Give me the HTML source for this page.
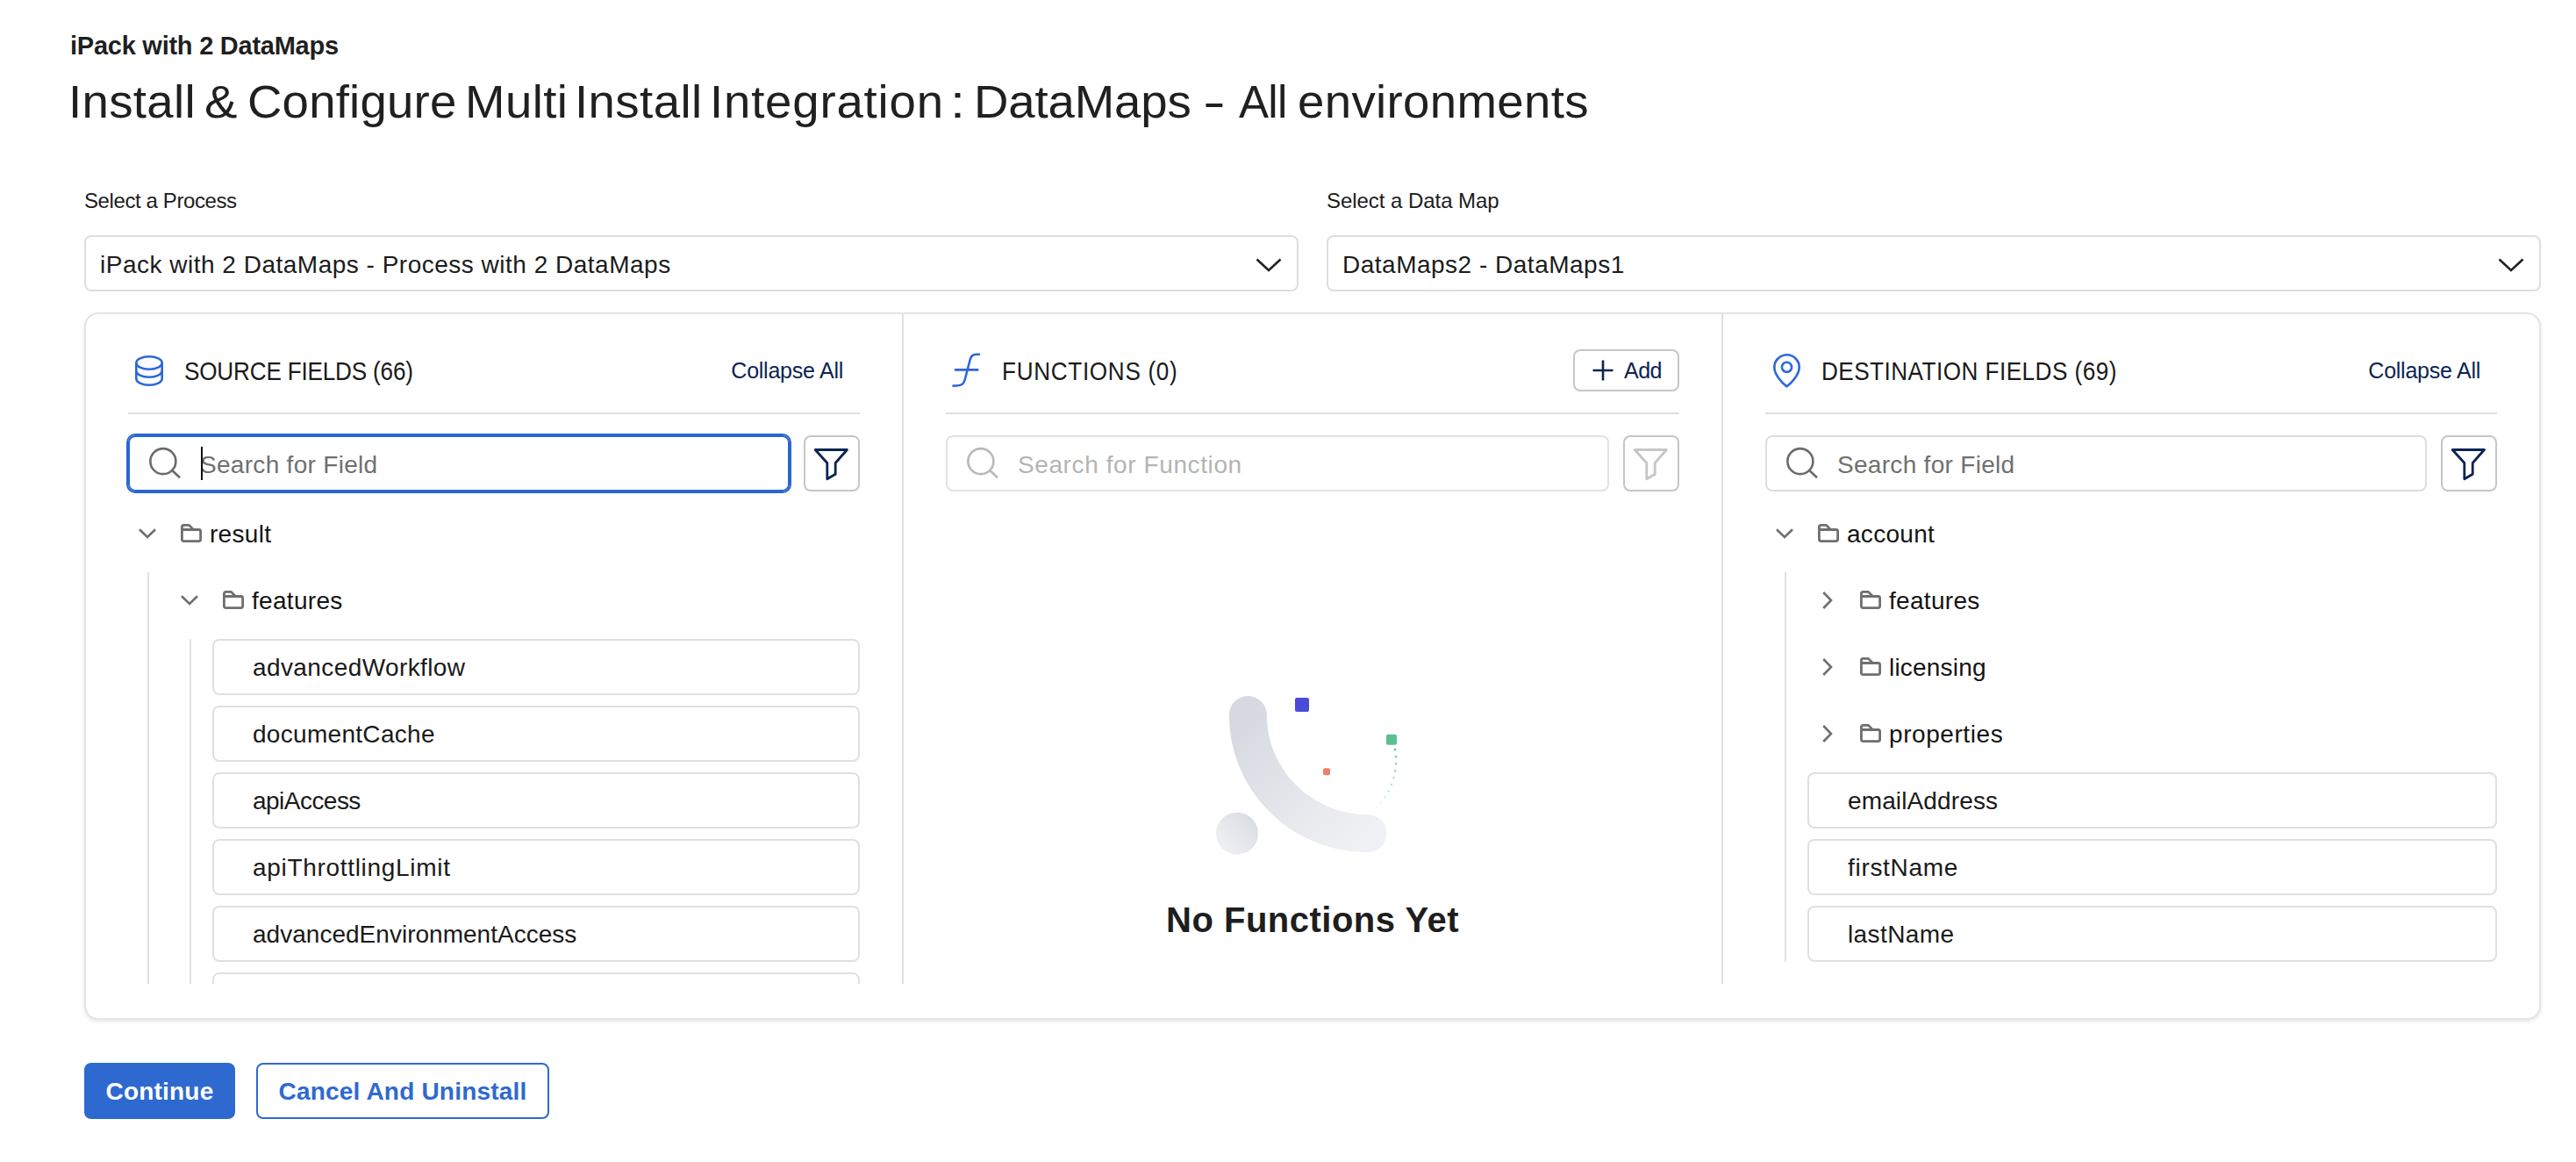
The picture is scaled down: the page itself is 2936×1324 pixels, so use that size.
<!DOCTYPE html>
<html lang="en">
<head>
<meta charset="utf-8">
<title>Install &amp; Configure Multi Install Integration</title>
<style>
*{box-sizing:border-box;margin:0;padding:0}
html,body{width:2936px;height:1324px;background:#fff}
body{font-family:"Liberation Sans",sans-serif;color:#1c1c1c;position:relative;-webkit-font-smoothing:antialiased}
svg{display:block;overflow:visible}
.sub{position:absolute;left:80px;top:32px;font-size:29px;line-height:40px;font-weight:bold;color:#1f1f1f;letter-spacing:-.25px;white-space:nowrap}
h1{position:absolute;left:0;top:85px;width:2000px;height:64px;font-size:51px;line-height:64px;font-weight:normal;color:#202020;white-space:nowrap}
h1 span{position:absolute;top:0;display:block;white-space:pre;transform-origin:0 50%}
.fld{position:absolute;top:213px;width:1384px}
.fld label{display:block;font-size:24px;line-height:32px;color:#1c1c1c;letter-spacing:-.4px;white-space:nowrap}
.sel{margin-top:23px;height:64px;border:2px solid #dedede;border-radius:8px;position:relative;padding:0 0 0 16px;font-size:28px;line-height:63px;letter-spacing:.5px;white-space:nowrap;color:#1c1c1c}
.sel svg{position:absolute;right:17px;top:24px}
.card{position:absolute;left:96px;top:356px;width:2800px;height:806px;border:2px solid #e4e4e4;border-radius:16px;box-shadow:0 2px 4px rgba(0,0,0,.10);background:#fff}
.cols{display:flex;height:763px;overflow:hidden}
.col{flex:none;width:930px;padding:40px 48px 0 48px;position:relative}
.col.c2{width:934px}
.col.c3{width:932px}
.col+.col{border-left:2px solid #e0e0e0}
.hd{height:74px;border-bottom:2px solid #e0e0e0;display:flex;align-items:flex-start;position:relative}
.hd .ic{position:absolute;left:0;top:0}
.hd .t{position:absolute;left:64px;top:5px;font-size:30px;line-height:40px;color:#1a1a1a;white-space:nowrap;transform-origin:0 50%;transform:scaleX(.87)}
.hd .lnk{position:absolute;right:19px;top:4px;font-size:25px;line-height:40px;color:#0a2452;white-space:nowrap;letter-spacing:-.25px}
.add{position:absolute;right:0;top:0;width:121px;height:48px;border:2px solid #c6c6c6;border-radius:8px;font-size:25px;line-height:44px;color:#0a2452;padding-left:56px;letter-spacing:-.5px}
.add svg{position:absolute;left:20px;top:10px}
.srow{margin-top:24px;display:flex;gap:16px;height:64px}
.inp{flex:1;border:2px solid #dedede;border-radius:8px;position:relative;font-size:28px;line-height:63px;padding-left:80px;color:#707070;white-space:nowrap;letter-spacing:.3px}
.inp svg{position:absolute;left:22px;top:12px}
.inp.foc{border-color:#2b66d0;box-shadow:0 0 0 2px #2b66d0}
.inp.foc i{position:absolute;left:81px;top:11px;width:2px;height:38px;background:#111}
.inp.dis{color:#b4b4b4;border-color:#e2e2e2}
.fbtn{width:64px;height:64px;border:2px solid #c6c6c6;border-radius:8px;flex:none}
.tree{margin-top:16px}
.row{height:64px;margin-bottom:12px;position:relative;font-size:28px;line-height:64px;color:#141414;white-space:nowrap}
.row .ch{position:absolute;left:10px;top:0}
.row .fo{position:absolute;left:58px;top:0}
.row span{position:absolute;left:93px;top:1px;letter-spacing:.3px}
.kids{border-left:2px solid #e1e1e1;margin-left:22px;padding-left:24px}
.leaf{height:64px;margin-bottom:12px;border:2px solid #e0e0e0;border-radius:8px;font-size:28px;line-height:61px;padding-left:44px;color:#1a1a1a;white-space:nowrap;letter-spacing:.3px}
.empty{position:absolute;left:0;right:0;top:0;text-align:center}
.empty h2{position:absolute;left:0;right:0;top:666px;font-size:40px;line-height:48px;font-weight:bold;color:#1e1e1e;letter-spacing:.5px}
.btn{position:absolute;top:1211px;height:64px;border-radius:8px;font-size:28px;font-weight:bold;line-height:65px;text-align:center;white-space:nowrap;letter-spacing:.2px}
.pri{left:96px;width:172px;background:#2e69d0;color:#fff}
.sec{left:292px;width:334px;border:2px solid #2e69d0;color:#2e69d0;line-height:61px;background:#fff}
</style>
</head>
<body>
<div class="sub">iPack with 2 DataMaps</div>
<h1><span style="left:77.8px;letter-spacing:0.32px;transform:scaleX(1.07)">Install </span><span style="left:233.1px;transform:scaleX(1.1)">&amp; </span><span style="left:281.9px;letter-spacing:0.2px;transform:scaleX(1.07)">Configure </span><span style="left:530.0px;letter-spacing:0.4px;transform:scaleX(1.07)">Multi </span><span style="left:655.4px;letter-spacing:0.4px;transform:scaleX(1.07)">Install </span><span style="left:809.2px;letter-spacing:0.76px;transform:scaleX(1.07)">Integration </span><span style="left:1083.2px;transform:scaleX(1.2)">: </span><span style="left:1110.1px;letter-spacing:-0.12px;transform:scaleX(1.07)">DataMaps </span><span style="left:1371.1px;transform:scaleX(1.52)">- </span><span style="left:1412px;letter-spacing:-.65px">All </span><span style="left:1479.3px;letter-spacing:0.34px;transform:scaleX(1.07)">environments </span></h1>

<div class="fld" style="left:96px">
  <label>Select a Process</label>
  <div class="sel">iPack with 2 DataMaps - Process with 2 DataMaps
    <svg width="30" height="16" viewBox="0 0 30 16"><path d="M1.5 1.5 L15 14 L28.5 1.5" fill="none" stroke="#222" stroke-width="2.6"/></svg>
  </div>
</div>
<div class="fld" style="left:1512px">
  <label style="letter-spacing:-.05px">Select a Data Map</label>
  <div class="sel">DataMaps2 - DataMaps1
    <svg width="30" height="16" viewBox="0 0 30 16"><path d="M1.5 1.5 L15 14 L28.5 1.5" fill="none" stroke="#222" stroke-width="2.6"/></svg>
  </div>
</div>

<div class="card">
<div class="cols">
<!--COL1--><div class="col">
  <div class="hd">
    <svg class="ic" style="left:8px;top:7px" width="32" height="36" viewBox="0 0 32 36"><g fill="none" stroke="#2d68d8" stroke-width="2.6"><ellipse cx="16" cy="8.5" rx="14.7" ry="7.2"/><path d="M1.3 8.5 V26.5 A14.7 7.2 0 0 0 30.7 26.5 V8.5"/><path d="M1.3 17.5 A14.7 7.2 0 0 0 30.7 17.5"/></g></svg>
    <div class="t" style="letter-spacing:-.2px">SOURCE FIELDS (66)</div>
    <div class="lnk">Collapse All</div>
  </div>
  <div class="srow">
    <div class="inp foc"><svg width="38" height="38" viewBox="0 0 38 38"><circle cx="15.85" cy="15.65" r="14.5" fill="none" stroke="#6b6b6b" stroke-width="2.6"/><path d="M26.2 26 L35 34.3" stroke="#6b6b6b" stroke-width="2.6" fill="none"/></svg><i></i>Search for Field</div>
    <div class="fbtn"><svg width="60" height="60" viewBox="0 0 60 60"><path d="M11.2 14.5 H47.4 L34.2 29.5 V42.3 L24.8 47.8 V29.5 Z" fill="none" stroke="#0a2452" stroke-width="2.8" stroke-linejoin="round"/></svg></div>
  </div>
  <div class="tree">
    <div class="row"><svg class="ch" style="left:12px;top:26px" width="20" height="12" viewBox="0 0 20 12"><path d="M1 1.2 L10 10 L19 1.2" fill="none" stroke="#6e6e6e" stroke-width="2.6"/></svg><svg class="fo" style="left:60px;top:21px" width="24" height="21" viewBox="0 0 24 21"><path d="M1.4 3.4 Q1.4 1.4 3.4 1.4 H9.5 L14.4 6.5 H20.6 Q22.6 6.5 22.6 8.5 V17.6 Q22.6 19.6 20.6 19.6 H3.4 Q1.4 19.6 1.4 17.6 Z M1.4 6.5 H14.4" fill="none" stroke="#6f6f6f" stroke-width="2.8" stroke-linejoin="round"/></svg><span>result</span></div>
    <div class="kids">
      <div class="row"><svg class="ch" style="left:12px;top:26px" width="20" height="12" viewBox="0 0 20 12"><path d="M1 1.2 L10 10 L19 1.2" fill="none" stroke="#6e6e6e" stroke-width="2.6"/></svg><svg class="fo" style="left:60px;top:21px" width="24" height="21" viewBox="0 0 24 21"><path d="M1.4 3.4 Q1.4 1.4 3.4 1.4 H9.5 L14.4 6.5 H20.6 Q22.6 6.5 22.6 8.5 V17.6 Q22.6 19.6 20.6 19.6 H3.4 Q1.4 19.6 1.4 17.6 Z M1.4 6.5 H14.4" fill="none" stroke="#6f6f6f" stroke-width="2.8" stroke-linejoin="round"/></svg><span>features</span></div>
      <div class="kids">
        <div class="leaf" style="letter-spacing:0.4px">advancedWorkflow</div>
        <div class="leaf">documentCache</div>
        <div class="leaf" style="letter-spacing:-0.53px">apiAccess</div>
        <div class="leaf" style="letter-spacing:0.69px">apiThrottlingLimit</div>
        <div class="leaf" style="letter-spacing:0.02px">advancedEnvironmentAccess</div>
        <div class="leaf">testConnectionLicensing</div>
        <div class="leaf">parallelProcessing</div>
      </div>
    </div>
  </div>
</div><!--/COL1-->
<!--COL2--><div class="col c2">
  <div class="hd">
    <svg class="ic" style="left:7px;top:4px" width="34" height="40" viewBox="0 0 34 40"><g fill="none" stroke="#2d68d8" stroke-width="2.6" stroke-linecap="round"><path d="M31 1.8 C25 1.5 22 2.5 20.6 8 L14.6 31 C13.2 36.5 9.8 37.6 1.5 37.6"/><path d="M4 19.4 H29.3"/></g></svg>
    <div class="t" style="letter-spacing:.8px">FUNCTIONS (0)</div>
    <div class="add"><svg width="24" height="24" viewBox="0 0 24 24"><path d="M12 0.5 V23.5 M0.5 12 H23.5" stroke="#0a2452" stroke-width="2.6" fill="none"/></svg>Add</div>
  </div>
  <div class="srow">
    <div class="inp dis" style="letter-spacing:.6px"><svg width="38" height="38" viewBox="0 0 38 38"><circle cx="15.85" cy="15.65" r="14.5" fill="none" stroke="#b9b9b9" stroke-width="2.6"/><path d="M26.2 26 L35 34.3" stroke="#b9b9b9" stroke-width="2.6" fill="none"/></svg>Search for Function</div>
    <div class="fbtn"><svg width="60" height="60" viewBox="0 0 60 60"><path d="M11.2 14.5 H47.4 L34.2 29.5 V42.3 L24.8 47.8 V29.5 Z" fill="none" stroke="#c6c6c6" stroke-width="2.8" stroke-linejoin="round"/></svg></div>
  </div>
  <div class="empty">
    <svg style="position:absolute;left:330px;top:412px" width="280" height="230" viewBox="1360 770 280 230">
      <defs>
        <linearGradient id="g1" x1="0" y1="0" x2="1" y2="1"><stop offset="0" stop-color="#d6d9e0"/><stop offset="1" stop-color="#f0f1f4"/></linearGradient>
        <linearGradient id="g2" x1="1" y1="0" x2="0" y2="1"><stop offset="0" stop-color="#d6d9e0"/><stop offset="1" stop-color="#f3f4f6"/></linearGradient>
        <linearGradient id="g3" x1="0" y1="0" x2="0" y2="1"><stop offset="0" stop-color="#5bbf8f"/><stop offset="1" stop-color="#5bbf8f" stop-opacity="0.05"/></linearGradient>
      </defs>
      <path d="M1422.3 814.5 A136.6 135.2 0 0 0 1558.9 949.7" fill="none" stroke="url(#g1)" stroke-width="43" stroke-linecap="round"/>
      <circle cx="1410" cy="949.7" r="24" fill="url(#g2)"/>
      <rect x="1476" y="795" width="16" height="16" rx="2" fill="#4b4bd8"/>
      <rect x="1580" y="836.7" width="12" height="12" rx="2" fill="#5bbf8f"/>
      <rect x="1508" y="875.2" width="8" height="8" rx="2" fill="#ee806a"/>
      <path d="M1590 854 Q1596 895 1565 924" fill="none" stroke="url(#g3)" stroke-width="2.4" stroke-dasharray="0.1 8" stroke-linecap="round"/>
    </svg>
    <h2>No Functions Yet</h2>
  </div>
</div><!--/COL2-->
<!--COL3--><div class="col c3">
  <div class="hd">
    <svg class="ic" style="left:8.6px;top:4.5px" width="31" height="39" viewBox="0 0 31 39"><g fill="none" stroke="#2d68d8" stroke-width="2.6" stroke-linejoin="round"><path d="M15.5 37.3 C15.5 37.3 1.3 26.5 1.3 15.5 A14.2 14.2 0 0 1 29.7 15.5 C29.7 26.5 15.5 37.3 15.5 37.3 Z"/><circle cx="15.5" cy="15.3" r="5.6"/></g></svg>
    <div class="t" style="letter-spacing:.55px">DESTINATION FIELDS (69)</div>
    <div class="lnk">Collapse All</div>
  </div>
  <div class="srow">
    <div class="inp"><svg width="38" height="38" viewBox="0 0 38 38"><circle cx="15.85" cy="15.65" r="14.5" fill="none" stroke="#6b6b6b" stroke-width="2.6"/><path d="M26.2 26 L35 34.3" stroke="#6b6b6b" stroke-width="2.6" fill="none"/></svg>Search for Field</div>
    <div class="fbtn"><svg width="60" height="60" viewBox="0 0 60 60"><path d="M11.2 14.5 H47.4 L34.2 29.5 V42.3 L24.8 47.8 V29.5 Z" fill="none" stroke="#0a2452" stroke-width="2.8" stroke-linejoin="round"/></svg></div>
  </div>
  <div class="tree">
    <div class="row"><svg class="ch" style="left:12px;top:26px" width="20" height="12" viewBox="0 0 20 12"><path d="M1 1.2 L10 10 L19 1.2" fill="none" stroke="#6e6e6e" stroke-width="2.6"/></svg><svg class="fo" style="left:60px;top:21px" width="24" height="21" viewBox="0 0 24 21"><path d="M1.4 3.4 Q1.4 1.4 3.4 1.4 H9.5 L14.4 6.5 H20.6 Q22.6 6.5 22.6 8.5 V17.6 Q22.6 19.6 20.6 19.6 H3.4 Q1.4 19.6 1.4 17.6 Z M1.4 6.5 H14.4" fill="none" stroke="#6f6f6f" stroke-width="2.8" stroke-linejoin="round"/></svg><span>account</span></div>
    <div class="kids last">
      <div class="row"><svg class="ch" style="left:17px;top:22px" width="12" height="20" viewBox="0 0 12 20"><path d="M1.2 1 L10 10 L1.2 19" fill="none" stroke="#6e6e6e" stroke-width="2.6"/></svg><svg class="fo" style="left:60px;top:21px" width="24" height="21" viewBox="0 0 24 21"><path d="M1.4 3.4 Q1.4 1.4 3.4 1.4 H9.5 L14.4 6.5 H20.6 Q22.6 6.5 22.6 8.5 V17.6 Q22.6 19.6 20.6 19.6 H3.4 Q1.4 19.6 1.4 17.6 Z M1.4 6.5 H14.4" fill="none" stroke="#6f6f6f" stroke-width="2.8" stroke-linejoin="round"/></svg><span>features</span></div>
      <div class="row"><svg class="ch" style="left:17px;top:22px" width="12" height="20" viewBox="0 0 12 20"><path d="M1.2 1 L10 10 L1.2 19" fill="none" stroke="#6e6e6e" stroke-width="2.6"/></svg><svg class="fo" style="left:60px;top:21px" width="24" height="21" viewBox="0 0 24 21"><path d="M1.4 3.4 Q1.4 1.4 3.4 1.4 H9.5 L14.4 6.5 H20.6 Q22.6 6.5 22.6 8.5 V17.6 Q22.6 19.6 20.6 19.6 H3.4 Q1.4 19.6 1.4 17.6 Z M1.4 6.5 H14.4" fill="none" stroke="#6f6f6f" stroke-width="2.8" stroke-linejoin="round"/></svg><span style="letter-spacing:0.2px">licensing</span></div>
      <div class="row"><svg class="ch" style="left:17px;top:22px" width="12" height="20" viewBox="0 0 12 20"><path d="M1.2 1 L10 10 L1.2 19" fill="none" stroke="#6e6e6e" stroke-width="2.6"/></svg><svg class="fo" style="left:60px;top:21px" width="24" height="21" viewBox="0 0 24 21"><path d="M1.4 3.4 Q1.4 1.4 3.4 1.4 H9.5 L14.4 6.5 H20.6 Q22.6 6.5 22.6 8.5 V17.6 Q22.6 19.6 20.6 19.6 H3.4 Q1.4 19.6 1.4 17.6 Z M1.4 6.5 H14.4" fill="none" stroke="#6f6f6f" stroke-width="2.8" stroke-linejoin="round"/></svg><span style="letter-spacing:0.57px">properties</span></div>
      <div class="leaf" style="letter-spacing:0.13px">emailAddress</div>
      <div class="leaf" style="letter-spacing:0.7px">firstName</div>
      <div class="leaf" style="letter-spacing:0.4px">lastName</div>
    </div>
  </div>
</div><!--/COL3-->
</div>
</div>

<div class="btn pri">Continue</div>
<div class="btn sec">Cancel And Uninstall</div>
</body>
</html>
